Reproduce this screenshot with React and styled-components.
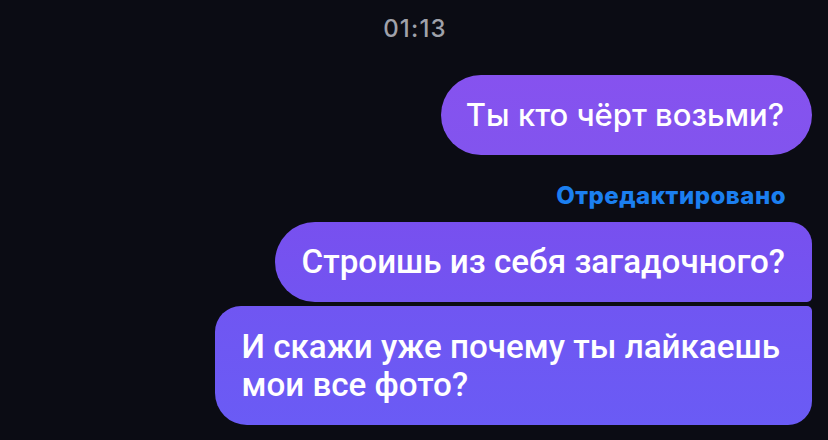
import styled, { createGlobalStyle } from "styled-components"

const Global = createGlobalStyle`
    html, body {
        margin: 0;
        padding: 0;
        background: #0b0c14;
    }
`

const Screen = styled.div`
    width: 828px;
    height: 440px;
    overflow: hidden;
    background: #0b0c14;
    display: flex;
    flex-direction: column;
    align-items: flex-end;
    padding: 0 16px 0 0;
    box-sizing: border-box;
`

const Time = styled.div`
    align-self: stretch;
    text-align: center;
    padding: 14px 0 0 18px;
    font-family: Inter, "Noto Sans", sans-serif;
    font-size: 24px;
    line-height: 30px;
    font-weight: 500;
    letter-spacing: 1.2px;
    color: #a0a2ab;
`

const Bubble = styled.div`
    box-sizing: border-box;
    color: #ffffff;
    background: ${({bg})=>bg};
    border-radius: ${({br})=>br};
    padding: ${({pd})=>pd};
    font-family: ${({ff})=>ff};
    font-size: ${({fs})=>fs};
    line-height: ${({lh})=>lh};
    font-weight: 500;
    margin-top: ${({mt})=>mt};
    min-height: ${({mh})=>mh};
    display: flex;
    align-items: center;
`

const Edited = styled.div`
    margin: 26px 26px 0 0;
    font-family: Inter, "Noto Sans", sans-serif;
    font-size: 24px;
    line-height: 30px;
    font-weight: 800;
    letter-spacing: 0.5px;
    color: #1b7ff0;
`

const Text = styled.span``

const App = () =>{
    return(
        <Screen>
            <Global/>
            <Time>01:13</Time>
            <Bubble
                bg="linear-gradient(180deg, #8652ef 0%, #8254ee 100%)"
                br="40px"
                pd="0 28px 0 25px"
                ff={'Inter, "Noto Sans", sans-serif'}
                fs="31px"
                lh="38px"
                mh="80px"
                mt="31px">
                <Text>Ты кто чёрт возьми?</Text>
            </Bubble>
            <Edited>Отредактировано</Edited>
            <Bubble
                bg="linear-gradient(180deg, #7850ef 0%, #7254f1 100%)"
                br="40px 22px 5px 40px"
                pd="0 27px 0 26px"
                ff={'Roboto, "Noto Sans", sans-serif'}
                fs="33.2px"
                lh="38px"
                mh="80px"
                mt="11px">
                <Text>Строишь из себя загадочного?</Text>
            </Bubble>
            <Bubble
                bg="linear-gradient(180deg, #7056f2 0%, #6a5bf5 100%)"
                br="26px 5px 24px 32px"
                pd="22px 32px 21px 26px"
                ff={'Roboto, "Noto Sans", sans-serif'}
                fs="33.2px"
                lh="38px"
                mh="119px"
                mt="4px">
                <Text>И скажи уже почему ты лайкаешь<br/>мои все фото?</Text>
            </Bubble>
        </Screen>
    )
}

export default App;
